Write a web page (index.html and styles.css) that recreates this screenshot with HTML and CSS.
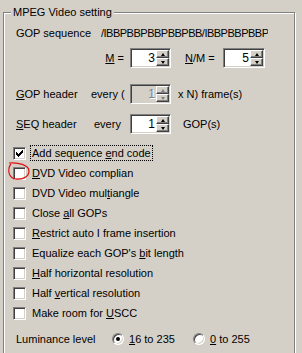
FILE: index.html
```html
<!doctype html>
<html>
<head>
    <meta charset="utf-8">
    <title>MPEG Video setting</title>
    <link rel="stylesheet" href="styles.css">
</head>
<body>

<div class="group">
    <span class="legend">MPEG Video setting</span>

    <div class="row row-seq">
        <span class="name-seq">GOP sequence</span>
        <span class="gop-string">/IBBPBBPBBPBBPBB/IBBPBBPBBPBBPBB/IBBPBB</span>
    </div>

    <div class="row row-m">
        <span class="name name-right"><u>M</u> =</span>
        <span class="spin">
            <span class="spin-value">3</span>
            <span class="spin-buttons">
                <span class="spin-btn"><i class="arrow-up"></i></span>
                <span class="spin-btn"><i class="arrow-down"></i></span>
            </span>
        </span>
        <span class="label-nm"><u>N</u>/M =</span>
        <span class="spin spin-wide">
            <span class="spin-value">5</span>
            <span class="spin-buttons">
                <span class="spin-btn"><i class="arrow-up"></i></span>
                <span class="spin-btn"><i class="arrow-down"></i></span>
            </span>
        </span>
    </div>

    <div class="row row-gop">
        <span class="name-short"><u>G</u>OP header</span>
        <span class="every">every (</span>
        <span class="spin disabled">
            <span class="spin-value">1</span>
            <span class="spin-buttons">
                <span class="spin-btn"><i class="arrow-up"></i></span>
                <span class="spin-btn"><i class="arrow-down"></i></span>
            </span>
        </span>
        <span class="after">x N) frame(s)</span>
    </div>

    <div class="row row-seqhdr">
        <span class="name-short"><u>S</u>EQ header</span>
        <span class="every every-pad">every</span>
        <span class="spin">
            <span class="spin-value">1</span>
            <span class="spin-buttons">
                <span class="spin-btn"><i class="arrow-up"></i></span>
                <span class="spin-btn"><i class="arrow-down"></i></span>
            </span>
        </span>
        <span class="after after-wide">GOP(s)</span>
    </div>

    <div class="check-list">
        <div class="check">
            <span class="box">
                <svg width="7" height="7" viewBox="0 0 7 7" shape-rendering="crispEdges"><path d="M0 2h1v3H0zM1 3h1v3H1zM2 4h1v3H2zM3 3h1v3H3zM4 2h1v3H4zM5 1h1v3H5zM6 0h1v3H6z" fill="#000"/></svg>
            </span>
            <span class="focus">Add sequence <u>e</u>nd code</span>
        </div>
        <div class="check"><span class="box"></span><span><u>D</u>VD Video complian</span></div>
        <div class="check"><span class="box"></span><span>DVD Video mul<u>t</u>iangle</span></div>
        <div class="check"><span class="box"></span><span>Close <u>a</u>ll GOPs</span></div>
        <div class="check"><span class="box"></span><span><u>R</u>estrict auto I frame insertion</span></div>
        <div class="check"><span class="box"></span><span>Equalize each GOP's <u>b</u>it length</span></div>
        <div class="check"><span class="box"></span><span><u>H</u>alf horizontal resolution</span></div>
        <div class="check"><span class="box"></span><span>Half <u>v</u>ertical resolution</span></div>
        <div class="check"><span class="box"></span><span>Make room for <u>U</u>SCC</span></div>
    </div>

    <div class="row row-lum">
        <span class="name-lum">Luminance level</span>
        <span class="option option-first"><span class="radio"><i class="dot"></i></span><span><u>1</u>6 to 235</span></span>
        <span class="option"><span class="radio"></span><span><u>0</u> to 255</span></span>
    </div>
</div>

<!-- red marker someone drew around the checkbox -->
<svg class="marker" width="302" height="353" viewBox="0 0 302 353">
    <path d="M9 163 C 18 162, 29 165, 29 171 C 29 177, 22 180, 15 179 C 10 178, 8 173, 9 168 C 9.5 166, 10 165, 11 164" fill="none" stroke="#e01010" stroke-width="1.2"/>
</svg>

</body>
</html>
```

FILE: styles.css
```css
body {
    margin: 0;
    background: #d4d0c8;
    font-family: "Liberation Sans", Arial, sans-serif;
    font-size: 11px;
    color: #000;
    overflow: hidden;
}

u {
    text-underline-offset: 1px;
}

/* etched group box */
.group {
    position: relative;
    margin: 12px 0 0 3px;
    width: 292px;
    height: 360px;
    box-sizing: border-box;
    border: 1px solid #808080;
    box-shadow: inset 1px 1px #fff, 1px 1px #fff;
    padding: 10px 0 0 12px;
}

.legend {
    position: absolute;
    left: 7px;
    top: -7px;
    padding: 0 2px;
    line-height: 13px;
    background: #d4d0c8;
}

.row {
    display: flex;
    align-items: center;
    height: 20px;
    white-space: nowrap;
}

.row-m { margin-top: 5px; }
.row-gop { margin-top: 16px; }
.row-seqhdr { margin-top: 10px; }
.row-lum { margin-top: 6px; }

.name-seq {
    width: 85px;
}

.gop-string {
    width: 167px;
    overflow: hidden;
    letter-spacing: -0.5px;
}

.name {
    width: 114px;
    box-sizing: border-box;
    padding-right: 6px;
}

.name-right {
    text-align: right;
}

.name-short {
    width: 75px;
}

.every {
    width: 39px;
}

.every-pad {
    padding-left: 3px;
    box-sizing: border-box;
}

.label-nm {
    margin-left: 14px;
    width: 38px;
}

.after {
    margin-left: 7px;
}

.after-wide {
    margin-left: 12px;
}

/* spin edit */
.spin {
    display: flex;
    width: 41px;
    height: 20px;
    box-sizing: border-box;
    padding: 1px;
    border: 1px solid;
    border-color: #808080 #fff #fff #808080;
    box-shadow: inset 1px 1px #404040, inset -1px -1px #d4d0c8;
    background: #fff;
}

.spin-wide {
    width: 42px;
}

.spin-value {
    flex: 1;
    text-align: right;
    padding-right: 1px;
    line-height: 16px;
    font-size: 12px;
}

.spin-buttons {
    display: flex;
    flex-direction: column;
    width: 13px;
}

.spin-btn {
    display: flex;
    align-items: center;
    justify-content: center;
    height: 8px;
    box-sizing: border-box;
    border: 1px solid;
    border-color: #fff #404040 #404040 #fff;
    box-shadow: inset -1px -1px #808080;
    background: #d4d0c8;
}

.arrow-up,
.arrow-down {
    width: 0;
    height: 0;
    border-left: 2.5px solid transparent;
    border-right: 2.5px solid transparent;
}

.arrow-up {
    border-bottom: 3px solid #000;
}

.arrow-down {
    border-top: 3px solid #000;
}

.disabled {
    background: #d4d0c8;
}

.disabled .spin-value {
    color: #808080;
    text-shadow: 1px 1px #fff;
}

.disabled .arrow-up {
    border-bottom-color: #808080;
}

.disabled .arrow-down {
    border-top-color: #808080;
}

/* check boxes */
.check-list {
    margin-top: 9px;
    margin-left: -3px;
}

.check {
    display: flex;
    align-items: center;
    height: 20px;
    white-space: nowrap;
}

.box {
    display: flex;
    align-items: center;
    justify-content: center;
    width: 13px;
    height: 13px;
    box-sizing: border-box;
    margin-right: 6px;
    border: 1px solid;
    border-color: #808080 #fff #fff #808080;
    box-shadow: inset 1px 1px #404040, inset -1px -1px #d4d0c8;
    background: #fff;
}

.focus {
    outline: 1px dotted #000;
    outline-offset: 1px;
}

/* radio buttons */
.name-lum {
    width: 96px;
}

.option {
    display: flex;
    align-items: center;
}

.option-first {
    width: 81px;
}

.radio {
    display: flex;
    align-items: center;
    justify-content: center;
    width: 12px;
    height: 12px;
    box-sizing: border-box;
    margin-right: 5px;
    border-radius: 50%;
    border: 1px solid;
    border-color: #808080 #fff #fff #808080;
    box-shadow: inset 1px 1px #404040, inset -1px -1px #d4d0c8;
    background: #fff;
}

.dot {
    width: 4px;
    height: 4px;
    border-radius: 50%;
    background: #000;
}

.marker {
    position: absolute;
    left: 0;
    top: 0;
    pointer-events: none;
}
```
